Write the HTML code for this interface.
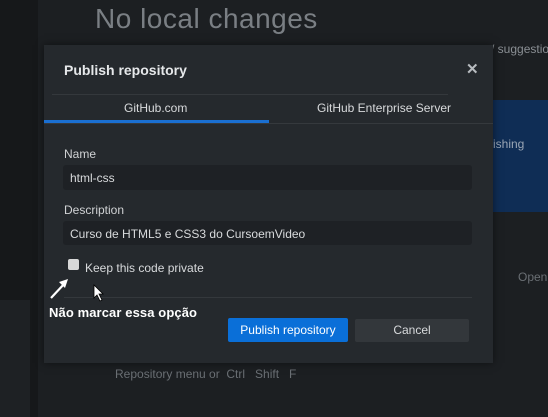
<!DOCTYPE html>
<html><head><style>
*{margin:0;padding:0;box-sizing:border-box}
body{width:548px;height:417px;overflow:hidden;background:#1c1f22;font-family:"Liberation Sans",sans-serif;position:relative;color:#d8dadc}
.a{position:absolute;white-space:nowrap}
</style></head><body>
<div class="a" style="left:0;top:0;width:38px;height:417px;background:#16181a"></div>
<div class="a" style="left:0;top:300px;width:30px;height:117px;background:#1e2124"></div>
<div class="a" style="left:95px;top:3px;font-size:28px;color:#7a7f84;font-weight:300;letter-spacing:0.5px">No local changes</div>
<div class="a" style="left:491px;top:42px;font-size:12px;color:#8a8f94">/ suggestio</div>
<div class="a" style="left:493px;top:100px;width:55px;height:112px;background:#0f2d55"></div>
<div class="a" style="left:493px;top:137px;font-size:12px;color:#9aa6b5">ishing</div>
<div class="a" style="left:518px;top:270px;font-size:12px;color:#6a6f74">Open</div>
<div class="a" style="left:115px;top:367px;font-size:12px;color:#6a6f74">Repository menu or &nbsp;Ctrl &nbsp; Shift &nbsp; F</div>
<div class="a" style="left:44px;top:45px;width:449px;height:318px;background:#25292d;box-shadow:0 0 8px rgba(0,0,0,.5)"></div>
<div class="a" style="left:64px;top:62px;font-size:14px;font-weight:bold;color:#e6e8ea">Publish repository</div>
<div class="a" style="left:466px;top:60px;font-size:15px;color:#b8bcc0;font-weight:bold">✕</div>
<div class="a" style="left:52px;top:94px;width:396px;height:1px;background:#34383c"></div>
<div class="a" style="left:124px;top:101px;font-size:12px;color:#d8dadc">GitHub.com</div>
<div class="a" style="left:317px;top:101px;font-size:12px;color:#d8dadc">GitHub Enterprise Server</div>
<div class="a" style="left:44px;top:120px;width:225px;height:3px;background:#1a6fd1"></div>
<div class="a" style="left:44px;top:123px;width:449px;height:1px;background:#35393d"></div>
<div class="a" style="left:64px;top:147px;font-size:12px;color:#d0d2d4">Name</div>
<div class="a" style="left:63px;top:165px;width:409px;height:25px;background:#1e2125;border-radius:3px"></div>
<div class="a" style="left:70px;top:171px;font-size:12px;color:#d8dadc">html-css</div>
<div class="a" style="left:64px;top:203px;font-size:12px;color:#d0d2d4">Description</div>
<div class="a" style="left:63px;top:221px;width:409px;height:24px;background:#1e2125;border-radius:3px"></div>
<div class="a" style="left:70px;top:227px;font-size:12px;color:#d8dadc">Curso de HTML5 e CSS3 do CursoemVideo</div>
<div class="a" style="left:68px;top:259px;width:11px;height:11px;background:#d8d8d8;border-radius:2px"></div>
<div class="a" style="left:85px;top:261px;font-size:12px;color:#d8dadc">Keep this code private</div>
<div class="a" style="left:64px;top:297px;width:408px;height:1px;background:#34383c"></div>
<svg class="a" style="left:48px;top:274px" width="24" height="26"><path d="M3 24 L17 9" stroke="#fff" stroke-width="2.2"/><path d="M20 5 L11 8 L17 14 Z" fill="#fff"/></svg>
<svg class="a" style="left:93px;top:284px" width="12" height="18"><path d="M1 1 L1 14 L4 11 L7 17 L9 16 L6 10 L10 10 Z" fill="#fff" stroke="#000" stroke-width="0.8"/></svg>
<div class="a" style="left:49px;top:305px;font-size:13px;font-weight:bold;color:#fff;letter-spacing:0.1px">Não marcar essa opção</div>
<div class="a" style="left:228px;top:318px;width:120px;height:24px;background:#0a6fd8;border-radius:2px;font-size:12px;color:#fff;text-align:center;line-height:24px">Publish repository</div>
<div class="a" style="left:355px;top:319px;width:114px;height:23px;background:#33373b;border-radius:2px;font-size:12px;color:#d8dadc;text-align:center;line-height:23px">Cancel</div>
</body></html>
